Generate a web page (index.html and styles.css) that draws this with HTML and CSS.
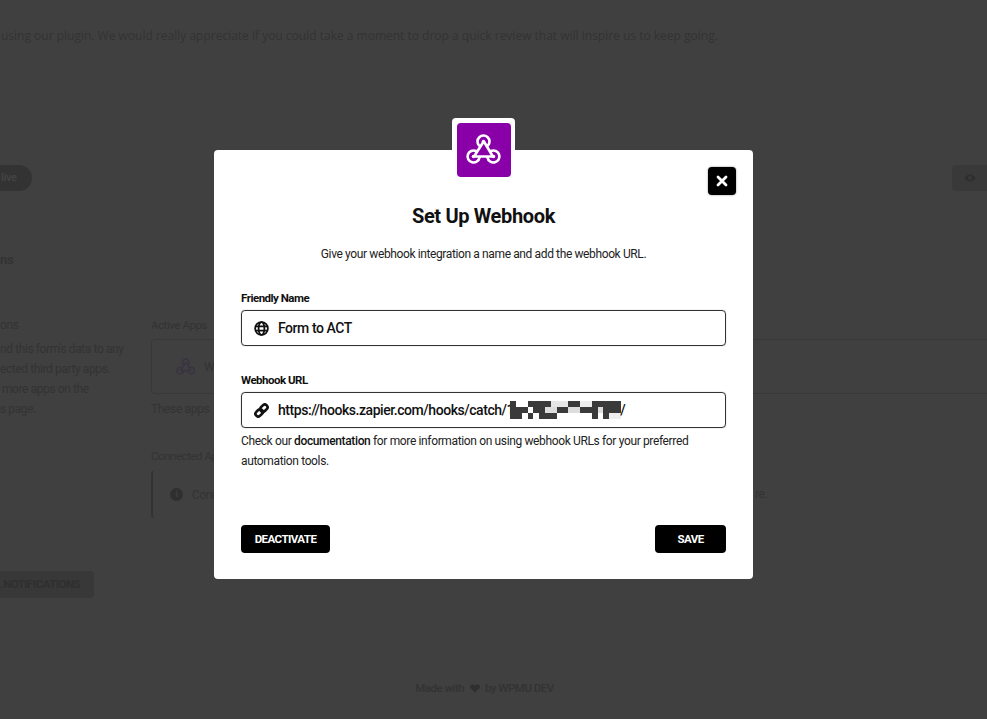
FILE: index.html
```html
<!DOCTYPE html>
<html lang="en">
<head>
<meta charset="utf-8">
<title>Set Up Webhook</title>
<link rel="stylesheet" href="styles.css">
</head>
<body>
<div class="page">
  <p class="review">using our plugin. We would really appreciate if you could take a moment to drop a quick review that will inspire us to keep going.</p>
  <div class="toolbar">
    <span class="live-pill">live</span>
    <span class="preview-btn">
      <svg class="eye" viewBox="0 0 24 24"><path d="M12 5C6.5 5 2.5 9 1 12c1.500 3 5.500 7 11 7s9.500-4 11-7c-1.500-3-5.500-7-11-7zm0 11a4 4 0 1 1 0-8 4 4 0 0 1 0 8z"/></svg>
    </span>
  </div>
  <h2 class="section-title">ns</h2>
  <div class="columns">
    <div class="side">
      <div class="side-head">ons</div>
      <div class="side-line">nd this form's data to any</div>
      <div class="side-line">ected third party apps.</div>
      <div class="side-line side-indent">more apps on the</div>
      <div class="side-line">s page.</div>
    </div>
    <div class="main">
      <div class="main-label">Active Apps</div>
      <div class="app-row">
        <svg class="app-icon" viewBox="0 0 40 38"><g class="hook"><path d="M15 15.500A6 6 0 1 1 24 15.500M12 21A6 6 0 1 0 15.500 27.500M27 21A6 6 0 1 1 23.500 27.500M19 12.500L11 25M20.500 12.500L28 25M11 26.500H28"/></g></svg>
        <span>Webhook</span>
      </div>
      <div class="main-note">These apps</div>
      <div class="main-label main-label-second">Connected Apps</div>
      <div class="info-box">
        <span class="info-dot">i</span>
        <span class="info-text">Connect</span>
        <span class="info-end">re.</span>
      </div>
    </div>
  </div>
  <div class="bottom-btn"><span>ALL NOTIFICATIONS</span></div>
  <div class="footer">Made with <svg class="heart" viewBox="0 0 12 11"><path d="M6 10.600 1.200 5.800A3 3 0 0 1 1 1.300 3 3 0 0 1 5.300 1.300L6 2l.7-.7a3 3 0 0 1 4.300 0 3 3 0 0 1-.2 4.500z"/></svg> by WPMU DEV</div>

  <div class="modal">
    <div class="logo">
      <div class="logo-inner">
        <svg class="logo-icon" viewBox="0 0 40 38">
          <g class="hook"><path d="M15 15.500A6 6 0 1 1 24 15.500M12 21A6 6 0 1 0 15.500 27.500M27 21A6 6 0 1 1 23.500 27.500M19 12.500L11 25M20.500 12.500L28 25M11 26.500H28"/></g>
          <circle class="hook-dot" cx="19.500" cy="11.500" r="1.800"/><circle class="hook-dot" cx="9.500" cy="26.500" r="1.800"/><circle class="hook-dot" cx="29.500" cy="26.500" r="1.800"/>
        </svg>
      </div>
    </div>
    <button class="close" type="button" aria-label="Close">
      <svg viewBox="0 0 12 12"><path d="M2 2l8 8M10 2l-8 8"/></svg>
    </button>
    <h1 class="title">Set Up Webhook</h1>
    <p class="subtitle">Give your webhook integration a name and add the webhook URL.</p>
    <div class="label">Friendly Name</div>
    <div class="input">
      <svg class="input-icon" viewBox="0 0 16 16"><g class="globe"><circle cx="8" cy="8" r="6.800"/><ellipse cx="8" cy="8" rx="3.100" ry="6.800"/><path d="M1.500 5.800h13M1.500 10.200h13"/></g></svg>
      <span>Form to ACT</span>
    </div>
    <div class="label label-second">Webhook URL</div>
    <div class="input">
      <svg class="input-icon" viewBox="0 0 16 16"><g class="chain"><rect x="1.200" y="7.600" width="8.600" height="5.800" rx="2.900" transform="rotate(-45 5.500 10.500)"/><rect x="6.200" y="2.600" width="8.600" height="5.800" rx="2.900" transform="rotate(-45 10.500 5.500)"/></g></svg>
      <span class="url">https://hooks.zapier.com/hooks/catch/1</span>
      <svg class="mask" viewBox="0 0 19 3" preserveAspectRatio="none" shape-rendering="crispEdges">
        <rect width="19" height="3" fill="#3a3a3a"/>
        <rect x="1" y="0" width="2" height="1" fill="#fff"/>
        <rect x="7" y="0" width="3" height="1" fill="#e6e6e6"/>
        <rect x="12" y="0" width="2" height="1" fill="#eee"/>
        <rect x="3" y="1" width="1" height="1" fill="#fff"/>
        <rect x="6" y="1" width="2" height="1" fill="#ddd"/>
        <rect x="10" y="1" width="2" height="1" fill="#ddd"/>
        <rect x="15" y="1" width="1" height="1" fill="#ddd"/>
        <rect x="2" y="2" width="1" height="1" fill="#fff"/>
        <rect x="4" y="2" width="1" height="1" fill="#fff"/>
        <rect x="8" y="2" width="6" height="1" fill="#fff"/>
        <rect x="15" y="2" width="1" height="1" fill="#fff"/>
        <rect x="17" y="2" width="2" height="1" fill="#eee"/>
      </svg>
      <span class="url-end">/</span>
    </div>
    <p class="help">Check our <span class="help-link">documentation</span> for more information on using webhook URLs for your preferred automation tools.</p>
    <div class="actions">
      <button class="btn" type="button">DEACTIVATE</button>
      <button class="btn btn-save" type="button">SAVE</button>
    </div>
  </div>
</div>
</body>
</html>
```
FILE: styles.css
```css
* { box-sizing: border-box; }
html, body { margin: 0; padding: 0; }
body { font-family: Roboto, "Liberation Sans", sans-serif; background: #404040; color: #333; }

.page { position: relative; width: 987px; height: 719px; overflow: hidden; background: #404040; display: flex; flex-direction: column; }

.review { margin: 27px 0 0 1px; font: 12px/18px "Open Sans", sans-serif; color: #333; white-space: nowrap; }

.toolbar { margin-top: 120px; height: 26px; display: flex; justify-content: space-between; }
.live-pill { width: 32px; background: #333; color: #454545; border-radius: 0 13px 13px 0; padding-left: 1px; font: 500 11px/26px Roboto, sans-serif; letter-spacing: -0.3px; }
.preview-btn { width: 40px; margin-right: -5px; background: #393939; border-radius: 4px; padding: 7px 0 0 12px; }
.eye { display: block; width: 12px; height: 12px; fill: #2f2f2f; }

.section-title { margin: 60px 0 0; font: 700 13px/18px Roboto, sans-serif; letter-spacing: -0.4px; color: #333; }

.columns { margin-top: 46px; display: flex; width: 1010px; }
.side { width: 151px; flex: none; }
.side-head { font: 12px/20px Roboto, sans-serif; letter-spacing: -0.35px; height: 24px; }
.side-line { font: 12px/20px Roboto, sans-serif; letter-spacing: -0.4px; white-space: nowrap; }
.side-indent { padding-left: 2px; }

.main { flex: 1; font: 12px/20px Roboto, sans-serif; letter-spacing: -0.35px; }
.main-label { height: 20px; font-size: 11.500px; letter-spacing: -0.45px; }
.main-label-second { margin-top: 27px; }
.app-row { height: 55px; margin-top: 4px; border: 1px solid #383838; border-right: 0; border-radius: 4px 0 0 4px; display: flex; align-items: center; gap: 7px; padding-left: 23px; }
.app-icon { width: 22px; height: 21px; }
.app-icon .hook { stroke: #3a3342; stroke-width: 3; }
.main-note { margin-top: 5px; height: 20px; }
.info-box { position: relative; height: 47px; margin-top: 5px; border-left: 2px solid #333; border-radius: 3px; display: flex; align-items: center; padding-left: 17px; gap: 9px; }
.info-dot { width: 13px; height: 13px; border-radius: 50%; background: #2f2f2f; color: #404040; font: 700 9px/13px Roboto, sans-serif; text-align: center; }
.info-end { position: absolute; left: 602px; top: 13px; }

.bottom-btn { margin-top: 53px; width: 94px; height: 27px; background: #383838; border-radius: 0 4px 4px 0; display: flex; justify-content: flex-end; padding-right: 14px; font: 700 11.500px/27px Roboto, sans-serif; letter-spacing: -0.55px; color: #2f2f2f; white-space: nowrap; }

.footer { margin-top: 81px; padding-right: 18px; display: flex; justify-content: center; align-items: center; white-space: pre; font: 500 11.500px/18px Roboto, sans-serif; letter-spacing: -0.5px; color: #333; }
.heart { width: 10px; height: 9px; margin: 0 3px; fill: #2f2f2f; }

.modal { position: absolute; left: 214px; top: 150px; width: 539px; height: 429px; background: #fff; border-radius: 4px; padding: 54px 27px 26px; display: flex; flex-direction: column; color: #111; }
.logo { position: absolute; left: 238px; top: -32px; width: 63px; height: 64px; background: #fff; border-radius: 4px; padding: 5px; }
.logo-inner { width: 54px; height: 54px; background: #8a00a8; border-radius: 4px; position: relative; overflow: hidden; }
.logo-icon { display: block; width: 40px; height: 38px; margin: 7px 0 0 7px; }
.hook { fill: none; stroke: #fff; stroke-width: 2.600; stroke-linecap: round; }
.hook-dot { fill: #fff; }
.close { position: absolute; left: 494px; top: 17px; width: 28px; height: 28px; padding: 8px; border: 0; border-radius: 4px; background: #000; box-shadow: 0 0 2px rgba(0,0,0,.5); }
.close svg { display: block; width: 12px; height: 12px; fill: none; stroke: #fff; stroke-width: 2.800; stroke-linecap: round; }

.title { margin: 0; text-align: center; font: 700 20px/24px Roboto, sans-serif; letter-spacing: -0.35px; color: #111; }
.subtitle { margin: 17px 0 0; text-align: center; font: 12px/18px Roboto, sans-serif; letter-spacing: -0.38px; color: #222; }
.label { margin-top: 28px; font: 700 11.500px/14px Roboto, sans-serif; letter-spacing: -0.5px; color: #111; }
.label-second { margin-top: 27px; }
.input { margin-top: 5px; height: 36px; border: 1px solid #333; border-radius: 4px; box-shadow: 0 0 1px rgba(0,0,0,.5); display: flex; align-items: center; padding-left: 12px; font: 500 14px/20px Roboto, sans-serif; letter-spacing: -0.45px; color: #111; }
.input-icon { width: 15px; height: 15px; margin-right: 9px; flex: none; }
.globe { fill: none; stroke: #111; stroke-width: 1.900; }
.chain { fill: none; stroke: #111; stroke-width: 2.800; }
.mask { width: 111px; height: 18px; margin-left: -4px; flex: none; }
.url-end { margin-left: -1px; }

.help { margin: 3px 0 0; font: 12px/20px Roboto, sans-serif; letter-spacing: -0.36px; color: #222; }
.help-link { font-weight: 500; color: #111; }

.actions { margin-top: auto; display: flex; justify-content: space-between; }
.btn { height: 28px; width: 89px; border: 0; border-radius: 4px; background: #000; color: #fff; font: 700 11.500px/28px Roboto, sans-serif; letter-spacing: -0.55px; padding: 0; }
.btn-save { width: 71px; }
```
